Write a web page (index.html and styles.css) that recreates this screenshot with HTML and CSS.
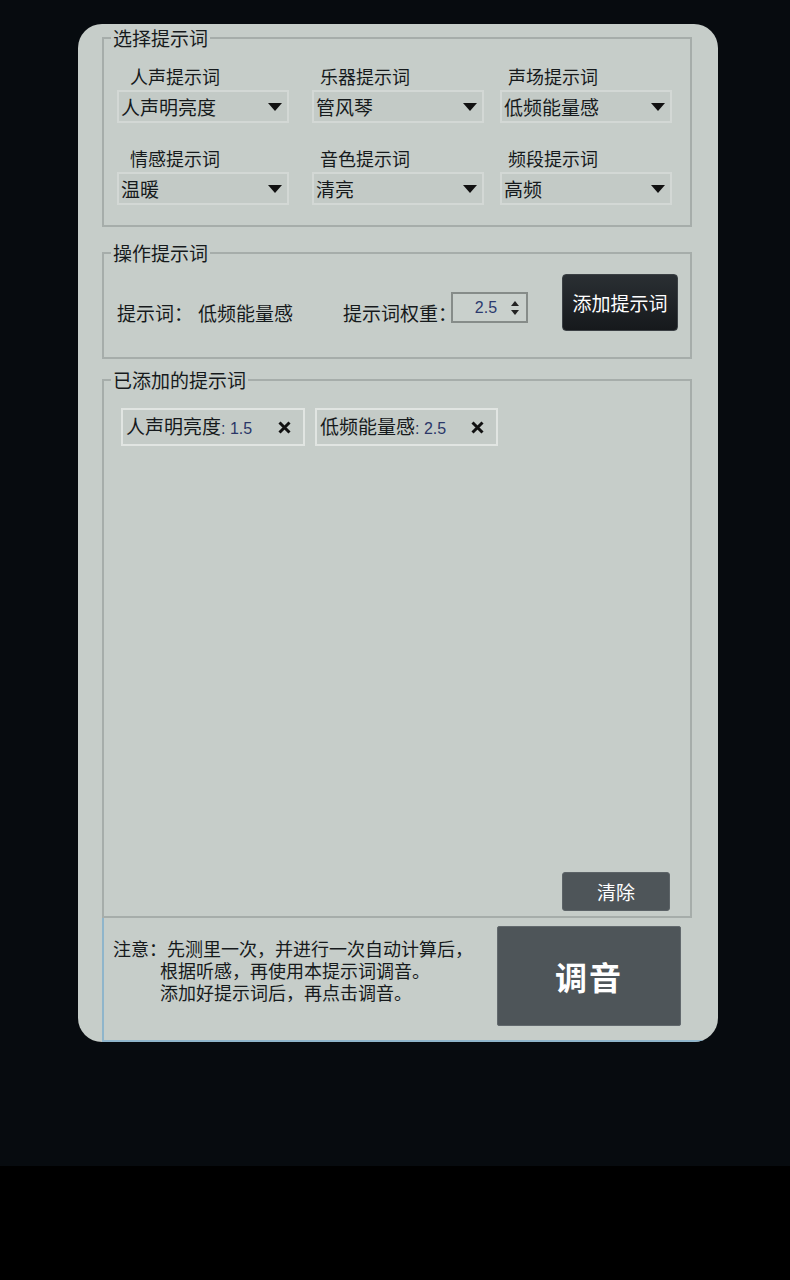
FILE: index.html
```html
<!DOCTYPE html>
<html lang="zh-CN">
<head>
    <meta charset="UTF-8">
    <meta name="viewport" content="width=device-width, initial-scale=1.0">
    <title>提示词调音</title>
    <link rel="stylesheet" href="styles.css">
</head>
<body>
    <div class="screen">
        <div class="panel">
            <fieldset class="group group-select">
                <legend>选择提示词</legend>
                <div class="combo-grid">
                    <div class="field">
                        <span class="field-label">人声提示词</span>
                        <div class="combo"><span>人声明亮度</span><i class="caret"></i></div>
                    </div>
                    <div class="field">
                        <span class="field-label">乐器提示词</span>
                        <div class="combo"><span>管风琴</span><i class="caret"></i></div>
                    </div>
                    <div class="field">
                        <span class="field-label">声场提示词</span>
                        <div class="combo"><span>低频能量感</span><i class="caret"></i></div>
                    </div>
                    <div class="field">
                        <span class="field-label">情感提示词</span>
                        <div class="combo"><span>温暖</span><i class="caret"></i></div>
                    </div>
                    <div class="field">
                        <span class="field-label">音色提示词</span>
                        <div class="combo"><span>清亮</span><i class="caret"></i></div>
                    </div>
                    <div class="field">
                        <span class="field-label">频段提示词</span>
                        <div class="combo"><span>高频</span><i class="caret"></i></div>
                    </div>
                </div>
            </fieldset>

            <fieldset class="group group-edit">
                <legend>操作提示词</legend>
                <div class="edit-row">
                    <span class="edit-text">提示词：<span class="current">低频能量感</span></span>
                    <span class="edit-text weight-label">提示词权重：</span>
                    <div class="spin">
                        <span class="spin-value">2.5</span>
                        <span class="spin-arrows"><i class="up"></i><i class="down"></i></span>
                    </div>
                    <button type="button" class="add-button">添加提示词</button>
                </div>
            </fieldset>

            <fieldset class="group group-list">
                <legend>已添加的提示词</legend>
                <div class="list-body">
                    <div class="tags">
                        <div class="tag">
                            <span class="tag-name">人声明亮度<span class="tag-num">: 1.5</span></span>
                            <svg class="tag-x" width="13" height="13" viewBox="0 0 13 13"><path d="M1.5 1.5 L11.5 11.5 M11.5 1.5 L1.5 11.5" stroke="#111" stroke-width="3"/></svg>
                        </div>
                        <div class="tag">
                            <span class="tag-name">低频能量感<span class="tag-num">: 2.5</span></span>
                            <svg class="tag-x" width="13" height="13" viewBox="0 0 13 13"><path d="M1.5 1.5 L11.5 11.5 M11.5 1.5 L1.5 11.5" stroke="#111" stroke-width="3"/></svg>
                        </div>
                    </div>
                    <button type="button" class="clear-button">清除</button>
                </div>
            </fieldset>

            <div class="notes">
                <div class="note-text">
                    <span class="note-line">注意：先测里一次，并进行一次自动计算后，</span>
                    <span class="note-line indent">根据听感，再使用本提示词调音。</span>
                    <span class="note-line indent">添加好提示词后，再点击调音。</span>
                </div>
                <button type="button" class="tune-button">调音</button>
            </div>
        </div>
    </div>
</body>
</html>
```

FILE: styles.css
```css
body {
    margin: 0;
    background-color: #000;
    font-family: "Noto Sans CJK SC", "Noto Sans", sans-serif;
    color: #161a1c;
}

.screen {
    height: 1166px;
    padding-top: 24px;
    box-sizing: border-box;
    background-color: #070b0f;
}

.panel {
    width: 640px;
    height: 1018px;
    margin-left: 78px;
    padding: 4px 0 0 24px;
    box-sizing: border-box;
    background-color: #c6cdc9;
    border-radius: 24px;
    overflow: hidden;
    display: flex;
    flex-direction: column;
}

.group {
    width: 590px;
    margin: 0;
    padding: 0;
    box-sizing: border-box;
    border: 2px solid #a6adaa;
}

.group legend {
    margin-left: 7px;
    padding: 0 2px;
    font-size: 19px;
    line-height: 20px;
}

/* 选择提示词 */
.combo-grid {
    display: grid;
    grid-template-columns: 195px 188px 172px;
    row-gap: 24px;
    padding: 17px 0 20px 13px;
}

.field {
    display: flex;
    flex-direction: column;
    gap: 3px;
}

.field-label {
    font-size: 18px;
    line-height: 22px;
    padding-left: 8px;
}

.field:first-child .field-label,
.field:nth-child(4) .field-label {
    padding-left: 13px;
}

.combo {
    width: 172px;
    height: 33px;
    box-sizing: border-box;
    border: 2px solid #d3d8d5;
    background-color: #c3cac6;
    display: flex;
    align-items: center;
    justify-content: space-between;
    padding: 0 5px 0 2px;
    font-size: 19px;
    line-height: 22px;
}

.caret {
    width: 0;
    height: 0;
    border-left: 7px solid transparent;
    border-right: 7px solid transparent;
    border-top: 8px solid #111;
}

/* 操作提示词 */
.group-edit {
    margin-top: 16px;
}

.edit-row {
    display: flex;
    align-items: flex-start;
    padding: 11px 0 26px 13px;
}

.edit-text {
    flex-shrink: 0;
    margin-top: 28px;
    font-size: 19px;
    line-height: 22px;
}

.current {
    margin-left: 5px;
}

.weight-label {
    margin-left: 50px;
    width: 108px;
    white-space: nowrap;
}

.spin {
    flex-shrink: 0;
    margin-top: 18px;
    width: 77px;
    height: 31px;
    box-sizing: border-box;
    border: 2px solid #868c89;
    background-color: #c9d0cc;
    display: flex;
    align-items: center;
    justify-content: flex-end;
    padding-right: 7px;
}

.spin-value {
    font-family: "Liberation Sans", Arial, sans-serif;
    font-size: 16px;
    color: #2c3a6e;
    margin-right: 14px;
}

.spin-arrows {
    display: flex;
    flex-direction: column;
    gap: 4px;
}

.spin-arrows i {
    width: 0;
    height: 0;
    border-left: 4px solid transparent;
    border-right: 4px solid transparent;
}

.spin-arrows .up {
    border-bottom: 5px solid #222;
}

.spin-arrows .down {
    border-top: 5px solid #222;
}

.add-button {
    flex-shrink: 0;
    margin-left: 34px;
    width: 116px;
    height: 57px;
    border: 1px solid #3b4044;
    border-radius: 4px;
    background: linear-gradient(#2a2f33, #16191c);
    color: #fff;
    font-family: inherit;
    font-size: 19px;
    padding: 0;
}

/* 已添加的提示词 */
.group-list {
    margin-top: 11px;
}

.list-body {
    height: 503px;
    display: flex;
    flex-direction: column;
    justify-content: space-between;
    align-items: flex-end;
    padding: 18px 20px 5px 17px;
}

.tags {
    align-self: stretch;
    display: flex;
    gap: 10px;
}

.tag {
    height: 38px;
    box-sizing: border-box;
    border: 2px solid #e1e5e2;
    background-color: #c4cbc7;
    display: flex;
    align-items: center;
    padding: 0 12px 0 3px;
}

.tag:first-child {
    width: 184px;
}

.tag:nth-child(2) {
    width: 183px;
}

.tag-name {
    flex: 1;
    font-size: 19px;
    line-height: 22px;
}

.tag-num {
    font-family: "Liberation Sans", Arial, sans-serif;
    font-size: 16px;
    color: #2b3768;
}

.clear-button {
    width: 108px;
    height: 39px;
    border: 1px solid #5c6367;
    border-radius: 3px;
    background-color: #4e5559;
    color: #fff;
    font-family: inherit;
    font-size: 19px;
    padding: 0;
}

/* 注意 */
.notes {
    height: 124px;
    box-sizing: border-box;
    border-left: 2px solid #8fb5cb;
    border-bottom: 2px solid #8fb5cb;
    display: flex;
    align-items: flex-start;
    padding: 8px 0 0 9px;
}

.note-text {
    margin-top: 11px;
    width: 384px;
    font-size: 18px;
}

.note-line {
    display: block;
    height: 22px;
    line-height: 22px;
    white-space: nowrap;
}

.indent {
    padding-left: 47px;
}

.tune-button {
    width: 184px;
    height: 100px;
    border: 1px solid #62696d;
    border-radius: 2px;
    background-color: #4e5559;
    color: #fff;
    font-family: inherit;
    font-size: 32px;
    font-weight: bold;
    letter-spacing: 2px;
    padding: 0;
}
```
